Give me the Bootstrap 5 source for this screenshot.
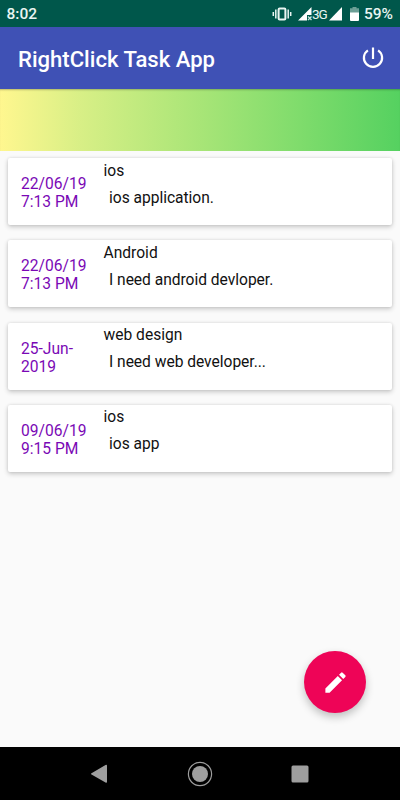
<!DOCTYPE html>
<html lang="en">
<head>
<meta charset="utf-8">
<meta name="viewport" content="width=device-width, initial-scale=1">
<title>RightClick Task App</title>
<link href="https://cdn.jsdelivr.net/npm/bootstrap@5.3.0/dist/css/bootstrap.min.css" rel="stylesheet">
<style>
body{font-family:Roboto,"Liberation Sans",sans-serif;background:#fafafa;color:#111;font-size:15.6px;line-height:18px}
.screen{height:800px}
.status-bar{height:27px;background:#00574b;font-size:15.5px;font-weight:500;color:#e9f5f2;padding:1px 7px 0 6.5px}
.status-bar .net{font-size:13.5px;font-weight:400;letter-spacing:-1px;width:15px}
.status-bar .sim-one{margin-left:6px}
.status-bar .sim-two{margin-left:2px}
.status-bar .cell{margin-left:7px}
.status-bar .percent{margin-left:5px}
.app-bar{height:62px;background:#3f51b5;padding:0 15.5px 1px 18px}
.app-title{font-size:22.1px;font-weight:500;color:#fff;line-height:28px;padding-top:6px}
.banner{height:62px;background:linear-gradient(to right,#fff78f 0%,#d8ef86 20%,#a8e577 50%,#7fdc6c 75%,#55d160 100%);box-shadow:inset 0 2px 2px -1px rgba(0,0,0,.25)}
.task-list{padding:7px 8px 0 7.5px;gap:15.3px}
.task-card{height:67px;border:0;border-radius:2px;box-shadow:0 2px 5px rgba(0,0,0,.2),0 0 3px rgba(0,0,0,.1)}
.task-date{width:96px;padding:8px 12px 5.1px 13.5px;color:#7a08b5}
.task-body{padding-top:3.55px}
.task-note{margin:9px 0 0 5.5px;letter-spacing:-.03px}
.fab{width:62px;height:62px;background:#ee0457;margin:0 34px 34px 0;box-shadow:0 4px 9px rgba(0,0,0,.24)}
.nav-keys{height:53px;background:#000;padding-right:1px}
svg{display:block;flex:none}
</style>
</head>
<body>
<div class="screen d-flex flex-column overflow-hidden">
  <div class="status-bar d-flex align-items-center">
    <span class="me-auto">8:02</span>
    <svg width="20" height="16" viewBox="0 0 20 16" fill="none" stroke="#e9f5f2" stroke-width="1.5"><rect x="6.6" y="2.4" width="6.8" height="11.2" rx="1" stroke-width="2"/><path d="M3.8 3.5v9M16.2 3.5v9M1.3 6v4M18.7 6v4"/></svg>
    <svg class="sim-one" width="14" height="14" viewBox="0 0 14 14"><path d="M13.500 0v8H9v5.500H0z" fill="#fff"/><path d="M10 9.500l3.500 3.500M13.500 9.500L10 13" stroke="#c5e5de" stroke-width="1.300"/></svg>
    <span class="net">3G</span>
    <svg class="sim-two" width="14" height="14" viewBox="0 0 14 14"><path d="M13 0v13.500H0z" fill="#fff"/></svg>
    <svg class="cell" width="9" height="14" viewBox="0 0 9 14"><path d="M2.5 0h4v1.3H9V6H0V1.3h2.5z" fill="#6d9f96"/><path d="M0 5.500h9V13q0 1-1 1H1q-1 0-1-1z" fill="#fff"/></svg>
    <span class="percent">59%</span>
  </div>
  <header class="app-bar navbar flex-nowrap">
    <span class="app-title pb-1">RightClick Task App</span>
    <svg width="24" height="24" viewBox="0 0 24 24" fill="none" stroke="#fff" stroke-width="2.2"><path d="M12 1.600v11.300M6.900 4.300a9.100 9.100 0 1 0 10.200 0"/></svg>
  </header>
  <div class="banner"></div>
  <main class="task-list d-flex flex-column">
    <article class="task-card card flex-row"><div class="task-date d-flex align-items-center">22/06/19 7:13 PM</div><div class="task-body"><div>ios</div><div class="task-note">ios application.</div></div></article>
    <article class="task-card card flex-row"><div class="task-date d-flex align-items-center">22/06/19 7:13 PM</div><div class="task-body"><div>Android</div><div class="task-note">I need android devloper.</div></div></article>
    <article class="task-card card flex-row"><div class="task-date d-flex align-items-center">25-Jun-2019</div><div class="task-body"><div>web design</div><div class="task-note">I need web developer...</div></div></article>
    <article class="task-card card flex-row"><div class="task-date d-flex align-items-center">09/06/19 9:15 PM</div><div class="task-body"><div>ios</div><div class="task-note">ios app</div></div></article>
  </main>
  <button class="fab btn rounded-circle border-0 p-0 mt-auto ms-auto d-flex align-items-center justify-content-center" type="button" aria-label="New task">
    <svg width="27" height="27" viewBox="0 0 24 24" fill="#fff"><path d="M3 17.25V21h3.75L17.81 9.94l-3.75-3.75L3 17.25zM20.71 7.04a1 1 0 0 0 0-1.41l-2.34-2.34a1 1 0 0 0-1.41 0l-1.83 1.83 3.75 3.75 1.83-1.83z"/></svg>
  </button>
  <nav class="nav-keys d-flex align-items-center justify-content-center">
    <svg width="218" height="26" viewBox="0 0 218 26" fill="#9e9e9e"><path d="M.5 12.2L14.5 4q1.500-.8 1.500.8v16q0 1.600-1.500.8L.5 13.600q-1-.7 0-1.400z"/><circle cx="109" cy="13" r="8"/><circle cx="109" cy="13" r="11.600" fill="none" stroke="#9e9e9e" stroke-width="1.200"/><rect x="200.500" y="4.500" width="17" height="17" rx="1.500"/></svg>
  </nav>
</div>
<script src="https://cdn.jsdelivr.net/npm/bootstrap@5.3.0/dist/js/bootstrap.bundle.min.js"></script>
</body>
</html>
